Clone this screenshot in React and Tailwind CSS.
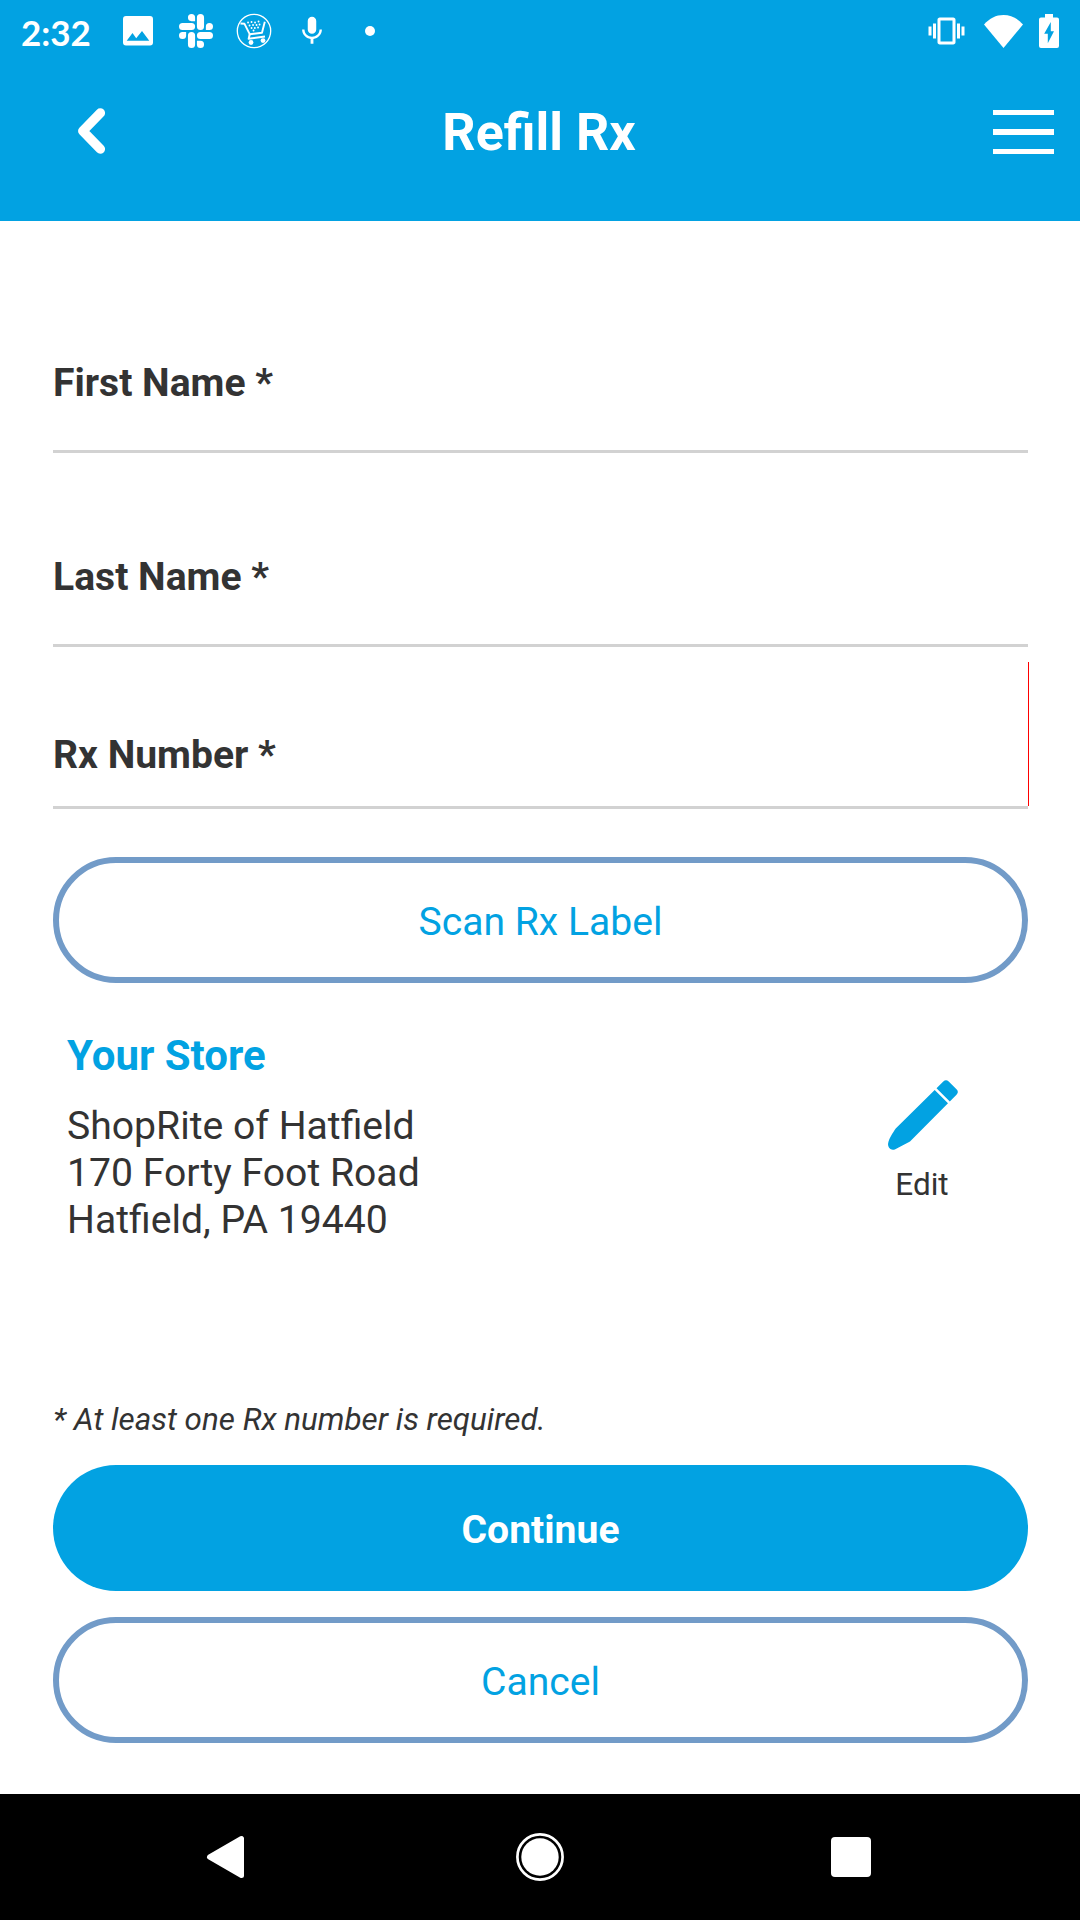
import React, { useState } from 'react'
import { MdMic, MdVibration } from 'react-icons/md'
import { SiSlack } from 'react-icons/si'

function PictureIcon() {
  return (
    <svg className="h-[30px] w-[30px]" viewBox="0 0 30 30" fill="currentColor">
      <path
        fillRule="evenodd"
        d="M3 0h24a3 3 0 0 1 3 3v23.5a3 3 0 0 1-3 3H3a3 3 0 0 1-3-3V3a3 3 0 0 1 3-3zM3.7 24.7h22.6L19 15l-5.8 7.3-3.7-5.2z"
      />
    </svg>
  )
}

function CartIcon() {
  return (
    <svg className="h-9 w-9" viewBox="0 0 36 36" fill="none" stroke="currentColor">
      <circle cx="18" cy="18" r="16.7" strokeWidth="1.3" />
      <path d="M4.5 10.5l4 .3 5.2 10.4 12.3-1.4 2.8-11" strokeWidth="1.9" strokeLinejoin="round" />
      <path d="M13.7 21.2l-1 4.6 16.3-2.3" strokeWidth="2" strokeLinejoin="round" />
      <path d="M12 9.5h.1M15.5 9h.1M19 9.5h.1M22.5 8.5h.1M13.5 12.5h.1M17 12h.1M20.5 12h.1M23.5 11.5h.1M15.5 15h.1M18.8 15h.1M22 14.5h.1M17.5 17.5h.1" strokeWidth="1.8" strokeLinecap="round" />
      <circle cx="15" cy="29.5" r="2.4" fill="currentColor" stroke="none" />
      <circle cx="27" cy="27.6" r="2.4" fill="currentColor" stroke="none" />
    </svg>
  )
}

function WifiIcon() {
  return (
    <svg className="h-[33px] w-[39px]" viewBox="0 0 39 33" fill="currentColor">
      <path d="M19.5 33L0 9.5C5.5 3.3 12 0 19.5 0S33.5 3.3 39 9.5z" />
    </svg>
  )
}

function BatteryIcon() {
  return (
    <svg className="h-[34px] w-5" viewBox="0 0 20 34" fill="currentColor">
      <path
        fillRule="evenodd"
        d="M6 0h8v3.5h4a2 2 0 0 1 2 2V32a2 2 0 0 1-2 2H2a2 2 0 0 1-2-2V5.5a2 2 0 0 1 2-2h4zM11.8 8L5.2 19.8h3.6v9.4L15 17.2h-3.2z"
      />
    </svg>
  )
}

function PencilIcon() {
  return (
    <svg className="h-[70px] w-[70px]" viewBox="0 0 70 70" fill="#02a2e2">
      <path d="M46.7 10L60 23.3 22 61.6 7.3 69.2C2.7 71.5-1 67 .3 62.5.9 59 4.5 53 7.7 48.4z" />
      <path d="M48.5 8.3L55.3 1.5q2.7-2.7 5.4 0l7.8 7.8q2.7 2.7 0 5.4L61.8 21.5z" />
    </svg>
  )
}

function StatusBar() {
  return (
    <div className="flex h-[62px] items-center justify-between px-[21px]">
      <div className="flex items-center">
        <span className="w-[102px] pt-px font-[Lato] text-[35px] leading-[40px] font-bold">2:32</span>
        <PictureIcon />
        <SiSlack className="ml-[26px] h-[34px] w-[34px]" />
        <span className="ml-[23px]"><CartIcon /></span>
        <MdMic className="ml-[23px] h-[34px] w-[34px]" />
        <span className="ml-9 h-[10px] w-[10px] rounded-full bg-white" />
      </div>
      <div className="flex items-center">
        <MdVibration className="h-[36px] w-[37px]" />
        <span className="ml-[19px]"><WifiIcon /></span>
        <span className="ml-4"><BatteryIcon /></span>
      </div>
    </div>
  )
}

function Header() {
  return (
    <header className="h-[221px] bg-[#02a2e2] text-white">
      <StatusBar />
      <div className="flex h-[140px] items-center justify-between pl-[78px] pr-[26px]">
        <button type="button" className="w-[61px]" aria-label="Back">
          <svg className="-mt-[3px] h-[46px] w-[27px]" viewBox="0 0 27 46" fill="none" stroke="currentColor" strokeWidth="9.5" strokeLinecap="round" strokeLinejoin="round">
            <path d="M22.3 5L4.8 23l17.5 18" />
          </svg>
        </button>
        <h1 className="ml-[-54px] pt-px text-[52px] leading-[62px] font-bold">Refill Rx</h1>
        <button type="button" className="flex w-[61px] flex-col gap-[14px]" aria-label="Menu">
          <span className="h-[5.5px] bg-white" />
          <span className="h-[5.5px] bg-white" />
          <span className="h-[5.5px] bg-white" />
        </button>
      </div>
    </header>
  )
}

function Field({ label, className = "", children }) {
  return (
    <label className={`relative flex flex-col justify-end border-b-[3px] border-[#d2d2d2] ${className}`}>
      <span className="text-[39.1px] leading-[46px] font-bold">{label}</span>
      {children}
    </label>
  )
}

function PillButton({ className = "", children }) {
  return (
    <button type="button" className={`h-[126px] w-full shrink-0 rounded-full pt-1 text-[39.1px] leading-[46px] ${className}`}>
      {children}
    </button>
  )
}

function NavBar() {
  return (
    <nav className="flex h-[126px] items-center justify-between bg-black pl-[206px] pr-[209px]">
      <svg className="h-[44px] w-[39px]" viewBox="0 0 39 44" fill="#fff" stroke="#fff" strokeWidth="5" strokeLinejoin="round">
        <path d="M3.5 22L35.5 3.5v37z" />
      </svg>
      <svg className="ml-[3px] h-12 w-12" viewBox="0 0 48 48">
        <circle cx="24" cy="24" r="22.6" fill="none" stroke="#fff" strokeWidth="2.7" />
        <circle cx="24" cy="24" r="18.7" fill="#fff" />
      </svg>
      <span className="h-10 w-10 rounded-[4px] bg-white" />
    </nav>
  )
}

export default function App() {
  const [store] = useState({
    name: 'ShopRite of Hatfield',
    street: '170 Forty Foot Road',
    city: 'Hatfield, PA 19440',
  })

  return (
    <div className="flex h-[1920px] w-[1080px] flex-col bg-white font-[Roboto,sans-serif] text-[#333333]">
      <Header />
      <main className="flex flex-1 flex-col pl-[53px] pr-[52px]">
        <Field label="First Name *" className="h-[232px] pb-[44px]" />
        <Field label="Last Name *" className="h-[194px] pb-[44px]" />
        <Field label="Rx Number *" className="h-[162px] pb-[28px]">
          <span className="absolute top-[15px] -right-px h-36 w-px bg-[#ff0000]" />
        </Field>

        <PillButton className="mt-12 border-[6px] border-[#729bc8] text-[#02a2e2]">Scan Rx Label</PillButton>

        <section className="mt-12 flex h-[370px] justify-between pl-[14px] pr-[70px]">
          <div>
            <h2 className="text-[42px] leading-[50px] font-bold text-[#02a2e2]">Your Store</h2>
            <address className="mt-[22px] text-[39.15px] leading-[47px] not-italic">
              <p>{store.name}</p>
              <p>{store.street}</p>
              <p>{store.city}</p>
            </address>
          </div>
          <button type="button" className="mt-[49px] flex flex-col items-center self-start">
            <PencilIcon />
            <span className="mt-4 pr-[2px] text-[31.5px] leading-[38px]">Edit</span>
          </button>
        </section>

        <p className="text-[31.4px] leading-[38px] italic">* At least one Rx number is required.</p>
        <PillButton className="mt-[26px] bg-[#02a2e2] font-bold text-white">Continue</PillButton>
        <PillButton className="mt-[26px] border-[6px] border-[#729bc8] text-[#02a2e2]">Cancel</PillButton>
      </main>
      <NavBar />
    </div>
  )
}
